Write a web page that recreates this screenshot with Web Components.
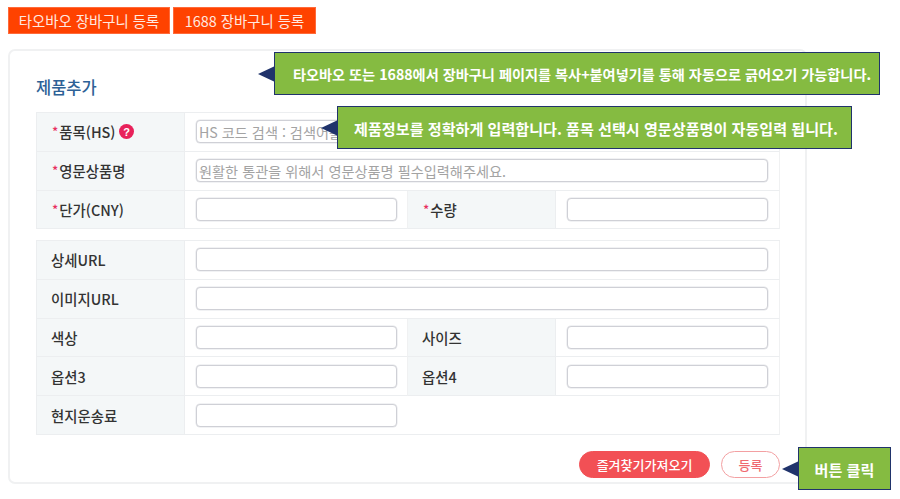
<!DOCTYPE html>
<html lang="ko"><head><meta charset="utf-8"><title>제품추가</title>
<style>
html,body{margin:0;padding:0;background:#fff;width:900px;height:499px;overflow:hidden}
body{font-family:"Noto Sans CJK KR","Noto Sans",sans-serif;position:relative}
</style></head><body>
<template id="t-btn"><style>
:host{display:block;height:27px;box-sizing:border-box;background:#ff4200;border:1px solid #ff6a3a;color:#ffe9e0;font-size:14.4px;line-height:25px;text-align:center;white-space:nowrap}
</style><slot></slot></template>

<template id="t-cell"><style>
:host{display:flex;align-items:center;box-sizing:border-box;height:38.8px;border-right:1px solid #f0f1f2;border-bottom:1px solid #eceef0;padding:0 11px 0 11px;min-width:0}
input{display:block;box-sizing:border-box;width:100%;height:23px;margin:0;padding:0 2px;border:1px solid #cfd0d6;border-radius:4px;background:#fff;font:14.2px "Noto Sans CJK KR",sans-serif;color:#333;box-shadow:0 0 0 .5px #e4e5e9;outline:none}
input::placeholder{color:#a3a3a3;opacity:1}
</style><input></template>

<template id="t-fill"><style>
:host{display:block;grid-column:span 2;border-right:1px solid #f0f1f2;border-bottom:1px solid #eceef0}
</style></template>

<template id="t-label"><style>
:host{display:flex;align-items:center;box-sizing:border-box;height:38.8px;background:#f4f7f8;border-right:1px solid #eceef0;border-bottom:1px solid #eceef0;padding:0 0 0 14px;font-size:14.4px;font-weight:500;color:#333;white-space:nowrap}
.req{display:none;color:#e8305f;font-size:13px;margin-right:1px}
:host([req]) .req{display:inline}
:host([req]){padding-left:15px}
</style><span class="req">*</span><slot></slot></template>

<template id="t-table"><style>
:host{display:grid;grid-template-columns:148px 223px 148px 224px;border-top:1px solid #eceef0;border-left:1px solid #eceef0;box-sizing:border-box;width:744px}
</style><slot></slot></template>

<template id="t-callout"><style>
:host{position:absolute;display:flex;align-items:center;justify-content:center;box-sizing:border-box;background:#85bb41;border:1px solid #20336b;color:#fff;font-size:15.1px;font-weight:700;white-space:nowrap}
svg{position:absolute;top:50%;margin-top:-8px;left:-17px}
</style><svg width="17" height="16" viewBox="0 0 17 16"><path d="M0 8 17 0V16Z" fill="#20336b"/></svg><slot></slot></template>

<template id="t-pill"><style>
:host{display:block;height:27px;box-sizing:border-box;border-radius:14px;font-size:13px;font-weight:500;line-height:25px;text-align:center;background:#f25055;color:#fff;border:1px solid #f25055;white-space:nowrap}
:host([outline]){background:#fff;color:#ef6a70;border-color:#f3a0a2}
</style><slot></slot></template>

<template id="t-card"><style>
:host{display:block;box-sizing:border-box;width:799px;height:435px;margin:15px 0 0 8px;border:2px solid #f0f1f2;border-radius:7px;padding:24px 26px 0 26px}
h2{margin:0 0 13px;font-size:16.5px;line-height:24px;font-weight:500;color:#2d6196}
</style><h2>제품추가</h2><slot></slot></template>

<template id="t-app"><style>
:host{display:block}
.top{display:flex;gap:3px;padding:7px 0 0 8px}
</style><div class="top"><slot name="top"></slot></div><slot></slot></template>

<x-app>
  <x-btn slot="top" style="width:162px">타오바오 장바구니 등록</x-btn>
  <x-btn slot="top" style="width:143px">1688 장바구니 등록</x-btn>
  <x-card>
    <x-table>
      <x-label req>품목(HS)<svg width="15" height="15" viewBox="0 0 15 15" style="margin-left:4px"><circle cx="7.5" cy="7.5" r="7.5" fill="#e8215a"/><text x="7.5" y="11.5" font-size="11" font-weight="700" text-anchor="middle" fill="#fff" font-family="Liberation Sans">?</text></svg></x-label>
      <x-cell style="grid-column:span 3" ph="HS 코드 검색 : 검색어를 입력하세요"></x-cell>
      <x-label req>영문상품명</x-label>
      <x-cell style="grid-column:span 3" ph="원활한 통관을 위해서 영문상품명 필수입력해주세요."></x-cell>
      <x-label req>단가(CNY)</x-label><x-cell style="padding-right:10px"></x-cell>
      <x-label req>수량</x-label><x-cell></x-cell>
    </x-table>
    <div style="height:10.6px"></div>
    <x-table>
      <x-label>상세URL</x-label><x-cell style="grid-column:span 3"></x-cell>
      <x-label>이미지URL</x-label><x-cell style="grid-column:span 3"></x-cell>
      <x-label>색상</x-label><x-cell style="padding-right:10px"></x-cell>
      <x-label>사이즈</x-label><x-cell></x-cell>
      <x-label>옵션3</x-label><x-cell style="padding-right:10px"></x-cell>
      <x-label>옵션4</x-label><x-cell></x-cell>
      <x-label>현지운송료</x-label><x-cell style="padding-right:11px;border-right:0"></x-cell><x-fill></x-fill>
    </x-table>
    <div style="display:flex;justify-content:flex-end;gap:11px;margin-top:16px;width:744px">
      <x-pill style="width:131px">즐겨찾기가져오기</x-pill>
      <x-pill outline style="width:59px">등록</x-pill>
    </div>
  </x-card>
</x-app>
<x-callout style="left:274px;top:52px;width:606px;height:43px;padding-left:10px;font-size:14.2px">타오바오 또는 1688에서 장바구니 페이지를 복사+붙여넣기를 통해 자동으로 긁어오기 가능합니다.</x-callout>
<x-callout style="left:337px;top:106px;width:515px;height:43px;padding-left:3px">제품정보를 정확하게 입력합니다. 품목 선택시 영문상품명이 자동입력 됩니다.</x-callout>
<x-callout style="left:798px;top:447px;width:93px;height:43px">버튼 클릭</x-callout>
<script>
const plain=(n,id)=>customElements.define(n,class extends HTMLElement{constructor(){super();this.attachShadow({mode:'open'}).append(document.getElementById(id).content.cloneNode(true));}});
[['x-app','t-app'],['x-btn','t-btn'],['x-card','t-card'],['x-table','t-table'],['x-label','t-label'],['x-fill','t-fill'],['x-callout','t-callout'],['x-pill','t-pill']].forEach(a=>plain(...a));
customElements.define('x-cell',class extends HTMLElement{constructor(){super();this.attachShadow({mode:'open'}).append(document.getElementById('t-cell').content.cloneNode(true));}
connectedCallback(){const p=this.getAttribute('ph');if(p)this.shadowRoot.querySelector('input').placeholder=p;}});
</script>
</body></html>
